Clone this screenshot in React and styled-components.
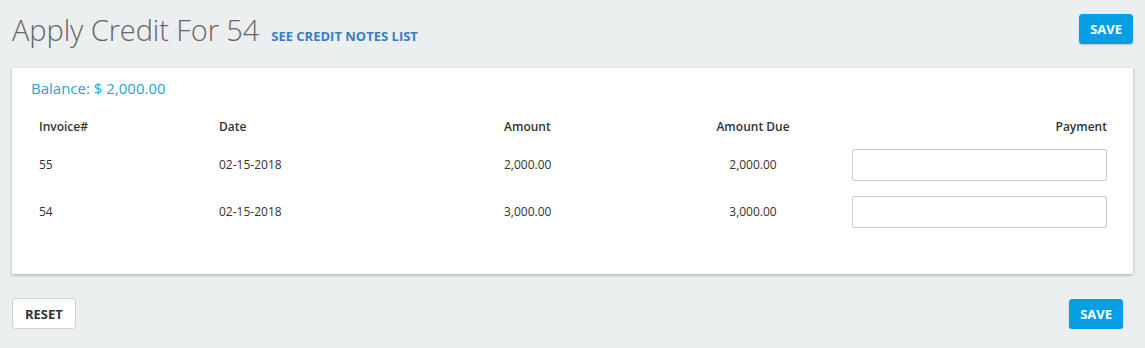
import React from 'react';
import styled, { createGlobalStyle } from 'styled-components';

const GlobalStyle = createGlobalStyle`
  html, body {
    margin: 0;
    padding: 0;
    background: #eceff0;
    font-family: "Open Sans", "Noto Sans", sans-serif;
  }
  * { box-sizing: border-box; }
`;

const Page = styled.div`
  padding: 0 12px;
  width: 1145px;
`;

const Header = styled.div`
  display: flex;
  align-items: center;
  justify-content: space-between;
  height: 56px;
  padding-top: 2px;
`;

const TitleGroup = styled.div`
  display: flex;
  align-items: baseline;
  gap: 12px;
`;

const Title = styled.h1`
  margin: 0;
  font-size: 29px;
  font-weight: 300;
  color: #666;
  letter-spacing: -0.1px;
`;

const Link = styled.a`
  font-size: 13px;
  font-weight: 700;
  color: #3b7dc4;
  text-transform: uppercase;
  text-decoration: none;
  cursor: pointer;
`;

const Button = styled.button`
  font-family: inherit;
  font-size: 13px;
  font-weight: 700;
  text-transform: uppercase;
  height: ${p => (p.$primary ? '30px' : '31px')};
  padding: 0 ${p => (p.$primary ? '10px' : '12px')};
  border-radius: 3px;
  cursor: pointer;
  border: 1px solid ${p => (p.$primary ? '#069fe6' : '#cfd3d6')};
  background: ${p => (p.$primary ? '#069fe6' : '#fff')};
  color: ${p => (p.$primary ? '#fff' : '#333')};
  box-shadow: ${p => (p.$primary ? '0 1px 2px rgba(0,0,0,0.2)' : 'none')};
`;

const Card = styled.div`
  margin-top: 12px;
  background: #fff;
  padding: 12px 18px 39px 19px;
  box-shadow: 0 1px 3px rgba(0, 0, 0, 0.3);
  width: 1121px;
`;

const Balance = styled.div`
  font-size: 15px;
  color: #2a9fdb;
  line-height: 16px;
`;

const Row = styled.div`
  display: grid;
  grid-template-columns: 180px 285px 166px 182px 1fr;
  align-items: center;
  height: ${p => (p.$head ? '30px' : '47px')};
  margin-top: ${p => (p.$head ? '15px' : '0')};
  font-size: 12px;
  font-weight: ${p => (p.$head ? 600 : 400)};
  color: #333;
`;

const Cell = styled.div`
  padding: 0 8px;
  text-align: ${p => p.$align || 'left'};
`;

const Input = styled.input`
  display: block;
  width: 100%;
  height: 32px;
  border: 1px solid #c7ccd6;
  border-radius: 2px;
  font-family: inherit;
  font-size: 12px;
  padding: 0 8px;
  outline: none;
`;

const Footer = styled.div`
  display: flex;
  align-items: center;
  justify-content: space-between;
  margin-top: 24px;
  padding-right: 10px;
  width: 1121px;
`;

const rows = [
  { id: '55', date: '02-15-2018', amount: '2,000.00', due: '2,000.00' },
  { id: '54', date: '02-15-2018', amount: '3,000.00', due: '3,000.00' },
];

const App = () => (
  <>
    <GlobalStyle />
    <Page>
      <Header>
        <TitleGroup>
          <Title>Apply Credit For 54</Title>
          <Link>See Credit Notes List</Link>
        </TitleGroup>
        <Button $primary>Save</Button>
      </Header>
      <Card>
        <Balance>Balance: $ 2,000.00</Balance>
        <Row $head>
          <Cell>Invoice#</Cell>
          <Cell>Date</Cell>
          <Cell>Amount</Cell>
          <Cell $align="center">Amount Due</Cell>
          <Cell $align="right">Payment</Cell>
        </Row>
        {rows.map(r => (
          <Row key={r.id}>
            <Cell>{r.id}</Cell>
            <Cell>{r.date}</Cell>
            <Cell>{r.amount}</Cell>
            <Cell $align="center">{r.due}</Cell>
            <Cell>
              <Input />
            </Cell>
          </Row>
        ))}
      </Card>
      <Footer>
        <Button>Reset</Button>
        <Button $primary>Save</Button>
      </Footer>
    </Page>
  </>
);

export default App;
